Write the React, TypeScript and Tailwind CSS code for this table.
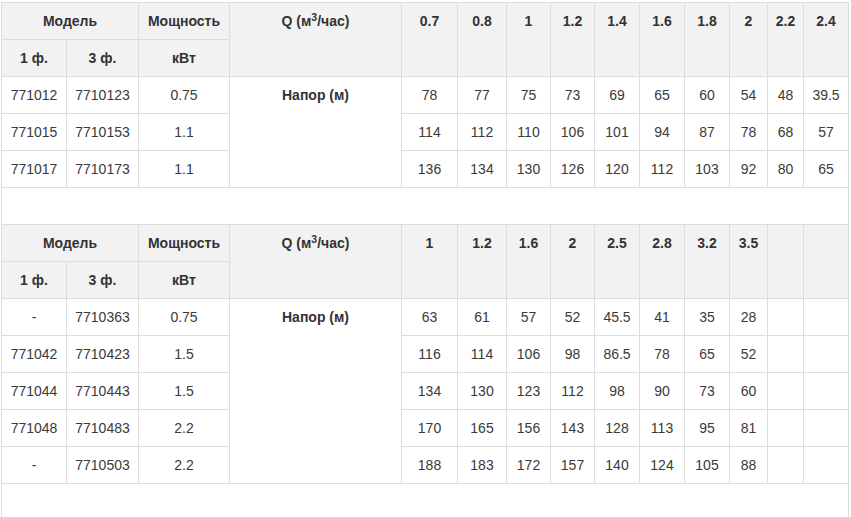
import React from "react";

const widths = [65, 72, 91, 172, 56, 49, 44, 44, 45, 45, 45, 38, 36, 45];

type Block = {
  q: string[];
  rows: { m1: string; m3: string; kw: string; h: string[] }[];
};

const blocks: Block[] = [
  {
    q: ["0.7", "0.8", "1", "1.2", "1.4", "1.6", "1.8", "2", "2.2", "2.4"],
    rows: [
      { m1: "771012", m3: "7710123", kw: "0.75", h: ["78", "77", "75", "73", "69", "65", "60", "54", "48", "39.5"] },
      { m1: "771015", m3: "7710153", kw: "1.1", h: ["114", "112", "110", "106", "101", "94", "87", "78", "68", "57"] },
      { m1: "771017", m3: "7710173", kw: "1.1", h: ["136", "134", "130", "126", "120", "112", "103", "92", "80", "65"] },
    ],
  },
  {
    q: ["1", "1.2", "1.6", "2", "2.5", "2.8", "3.2", "3.5", "", ""],
    rows: [
      { m1: "-", m3: "7710363", kw: "0.75", h: ["63", "61", "57", "52", "45.5", "41", "35", "28", "", ""] },
      { m1: "771042", m3: "7710423", kw: "1.5", h: ["116", "114", "106", "98", "86.5", "78", "65", "52", "", ""] },
      { m1: "771044", m3: "7710443", kw: "1.5", h: ["134", "130", "123", "112", "98", "90", "73", "60", "", ""] },
      { m1: "771048", m3: "7710483", kw: "2.2", h: ["170", "165", "156", "143", "128", "113", "95", "81", "", ""] },
      { m1: "-", m3: "7710503", kw: "2.2", h: ["188", "183", "172", "157", "140", "124", "105", "88", "", ""] },
    ],
  },
];

const cell = "border border-[#dddddd] px-0 py-2 align-top text-center leading-5";
const th = `${cell} bg-[#f2f2f2] font-bold text-[#333333]`;
const td = `${cell} text-[#3a3a3a]`;

function Spacer() {
  return (
    <tr>
      <td colSpan={14} className="border border-[#dddddd] h-[37px]" />
    </tr>
  );
}

function PumpBlock({ block }: { block: Block }) {
  return (
    <>
      <tr>
        <th colSpan={2} className={th}>Модель</th>
        <th className={th}>Мощность</th>
        <th rowSpan={2} className={th}>
          Q (м<sup>3</sup>/час)
        </th>
        {block.q.map((q, i) => (
          <th key={i} rowSpan={2} className={th}>{q}</th>
        ))}
      </tr>
      <tr>
        <th className={th}>1 ф.</th>
        <th className={th}>3 ф.</th>
        <th className={th}>кВт</th>
      </tr>
      {block.rows.map((r, i) => (
        <tr key={i}>
          <td className={td}>{r.m1}</td>
          <td className={td}>{r.m3}</td>
          <td className={td}>{r.kw}</td>
          {i === 0 && (
            <td rowSpan={block.rows.length} className={`${td} font-bold text-[#333333]`}>
              Напор (м)
            </td>
          )}
          {r.h.map((h, j) => (
            <td key={j} className={td}>{h}</td>
          ))}
        </tr>
      ))}
    </>
  );
}

export default function App() {
  return (
    <div className="bg-white w-[851px] h-[517px] overflow-hidden pl-px pt-[2px] font-['Liberation_Sans',Arial,sans-serif] text-[14px]">
      <table className="table-fixed border-collapse w-[847px]">
        <colgroup>
          {widths.map((w, i) => (
            <col key={i} style={{ width: w }} />
          ))}
        </colgroup>
        <tbody>
          <PumpBlock block={blocks[0]} />
          <Spacer />
          <PumpBlock block={blocks[1]} />
          <Spacer />
        </tbody>
      </table>
    </div>
  );
}
